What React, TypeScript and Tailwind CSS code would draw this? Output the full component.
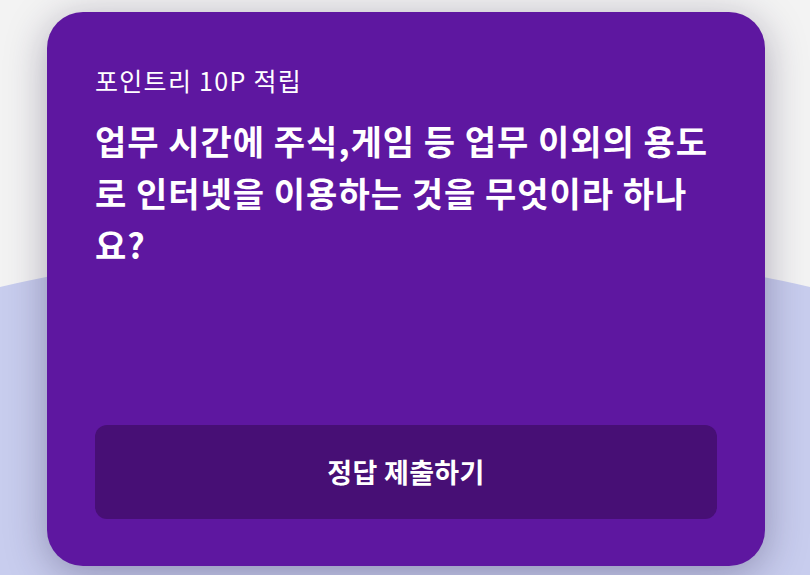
import React from "react";

export default function App() {
  const font = { fontFamily: '"Noto Sans CJK KR", "Noto Sans", sans-serif' };
  return (
    <div
      className="relative w-[810px] h-[575px] overflow-hidden bg-[#f3f3f3]"
      style={font}
    >
      <div className="absolute left-[-395px] top-[243px] w-[1600px] h-[640px] rounded-[50%] bg-[#c8cdee]" />
      <div className="relative ml-[47px] mt-[12px] w-[718px] h-[554px] rounded-[36px] bg-[#5e17a0] shadow-[0_8px_40px_rgba(40,30,70,0.35)] flex flex-col px-[48px] pt-[52px] pb-[47px]">
        <div className="text-[25px] leading-[32px] tracking-[1.3px] text-white font-normal">
          포인트리 10P 적립
        </div>
        <div className="mt-[19px] text-[34px] leading-[52px] tracking-[1px] text-white font-bold">
          업무 시간에 주식,게임 등 업무 이외의 용도로 인터넷을 이용하는 것을 무엇이라 하나요?
        </div>
        <div className="mt-auto h-[94px] rounded-[12px] bg-[#470f75] flex items-center justify-center">
          <span className="text-[27px] tracking-[0.3px] font-semibold text-white">정답 제출하기</span>
        </div>
      </div>
    </div>
  );
}
